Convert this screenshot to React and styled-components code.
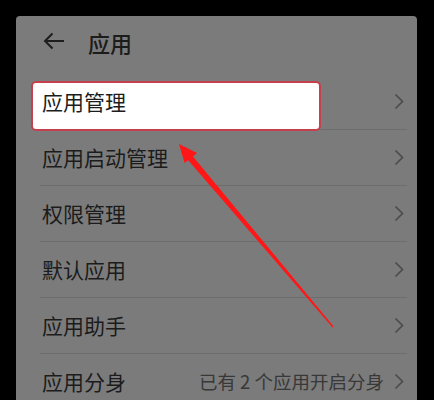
import React from 'react';
import styled, { createGlobalStyle } from 'styled-components';

const GlobalStyle = createGlobalStyle`
  html, body {
    margin: 0;
    padding: 0;
    background: #000;
  }
  body {
    font-family: "Noto Sans CJK SC", "Noto Sans", sans-serif;
  }
`;

const items = [
  { label: '应用管理', highlighted: true },
  { label: '应用启动管理' },
  { label: '权限管理' },
  { label: '默认应用' },
  { label: '应用助手' },
  { label: '应用分身', value: '已有 2 个应用开启分身' },
];

function BackIcon() {
  return (
    <svg width="22" height="18" viewBox="0 0 22 18" fill="none">
      <path d="M21 9H2M9.5 1.5L2 9l7.5 7.5" stroke="#1e1e1e" strokeWidth="2" />
    </svg>
  );
}

function Chevron() {
  return (
    <svg width="10" height="17" viewBox="0 0 10 17" fill="none">
      <path d="M1.5 1.5L8.5 8.5l-7 7" stroke="#4a4a4a" strokeWidth="1.6" />
    </svg>
  );
}

function RedArrow() {
  // annotation drawn over the list
  return (
    <Overlay width="434" height="400" viewBox="0 0 434 400">
      <polygon
        points="179,144 197,153 193,156.4 333.6,326.6 332.6,327.4 188.2,160.2 184.6,163"
        fill="#ff1717"
      />
    </Overlay>
  );
}

export default function App() {
  return (
    <>
      <GlobalStyle />
      <Screen>
        <Panel>
          <Header>
            <BackButton><BackIcon /></BackButton>
            <Title>应用</Title>
          </Header>
          <List>
            {items.map((item) => (
              <Row key={item.label}>
                {item.highlighted && <Highlight />}
                <Label>{item.label}</Label>
                <Right>
                  {item.value && <Value>{item.value}</Value>}
                  <Chevron />
                </Right>
              </Row>
            ))}
          </List>
        </Panel>
        <RedArrow />
      </Screen>
    </>
  );
}

const Screen = styled.div`
  position: relative;
  height: 400px;
  overflow: hidden;
  padding: 16px 17px 0 16px;
  box-sizing: border-box;
`;

const Panel = styled.div`
  background: #7b7b7b;
  border-radius: 4px 4px 0 0;
  height: 420px;
`;

const Header = styled.div`
  display: flex;
  align-items: center;
  height: 52px;
  padding: 0 0 6px 27px;
`;

const BackButton = styled.div`
  display: flex;
  align-items: center;
  margin-top: -3px;
`;

const Title = styled.div`
  margin-left: 23px;
  font-size: 22px;
  font-weight: 500;
  color: #1c1c1c;
  line-height: 1;
`;

const List = styled.div`
  display: flex;
  flex-direction: column;
`;

const Row = styled.div`
  position: relative;
  display: flex;
  align-items: center;
  justify-content: space-between;
  height: 56px;
  margin: 0 10px 0 24px;
  border-bottom: 1px solid #6d6d6d;
  box-sizing: border-box;
`;

const Highlight = styled.div`
  position: absolute;
  left: -9px;
  top: 7px;
  width: 290px;
  height: 50px;
  box-sizing: border-box;
  background: #fff;
  border: 2px solid #c4404d;
  border-radius: 5px;
`;

const Label = styled.div`
  position: relative;
  padding-left: 2px;
  font-size: 21px;
  color: #1c1c1c;
  line-height: 1;
`;

const Right = styled.div`
  display: flex;
  align-items: center;
  gap: 10px;
  padding-right: 3px;
`;

const Value = styled.span`
  font-size: 18.5px;
  color: #383838;
  line-height: 1;
`;

const Overlay = styled.svg`
  position: absolute;
  top: 0;
  left: 0;
  pointer-events: none;
`;
